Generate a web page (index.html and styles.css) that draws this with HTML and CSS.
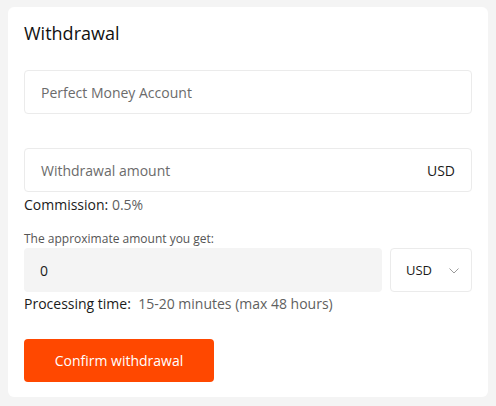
FILE: index.html
```html
<!DOCTYPE html>
<html lang="en">
<head>
<meta charset="utf-8">
<title>Withdrawal</title>
<link rel="stylesheet" href="styles.css">
</head>
<body>
<div class="card">
  <h2 class="title">Withdrawal</h2>
  <div class="field field-account">
    <span class="placeholder">Perfect Money Account</span>
  </div>
  <div class="field field-amount">
    <span class="placeholder">Withdrawal amount</span>
    <span class="unit">USD</span>
  </div>
  <div class="info commission"><span class="key">Commission:</span> <span class="val">0.5%</span></div>
  <div class="small-label">The approximate amount you get:</div>
  <div class="get-row">
    <div class="get-value">0</div>
    <div class="select">
      <span class="unit">USD</span>
      <svg class="chev" width="10" height="6" viewBox="0 0 10 6"><path d="M0.5 0.5 L5 5 L9.5 0.5" fill="none" stroke="#9a9a9a" stroke-width="1"/></svg>
    </div>
  </div>
  <div class="info processing"><span class="key">Processing time:</span>&nbsp; <span class="val">15-20 minutes (max 48 hours)</span></div>
  <button class="confirm">Confirm withdrawal</button>
</div>
</body>
</html>
```
FILE: styles.css
```css
html, body {
  margin: 0;
  padding: 0;
}
body {
  background: #f4f4f4;
  font-family: "Open Sans", "Liberation Sans", sans-serif;
  color: #1b1b1b;
  padding: 7px 8px 0 8px;
}
.card {
  background: #ffffff;
  border-radius: 6px;
  padding: 12px 16px 15px 16px;
  display: flex;
  flex-direction: column;
  width: 448px;
}
.title {
  margin: 0;
  font-size: 18px;
  font-weight: 400;
  line-height: 28px;
  color: #111;
}
.field {
  height: 44px;
  box-sizing: border-box;
  border: 1px solid #ebebeb;
  border-radius: 4px;
  display: flex;
  align-items: center;
  justify-content: space-between;
  padding: 0 16px;
  font-size: 14px;
}
.field-account {
  margin-top: 23px;
}
.field-amount {
  margin-top: 34px;
}
.placeholder {
  color: #6b6b6b;
}
.unit {
  color: #1b1b1b;
  font-size: 14px;
}
.info {
  font-size: 14px;
  line-height: 20px;
}
.info .key {
  color: #1b1b1b;
}
.info .val {
  color: #5f5f5f;
}
.commission {
  margin-top: 3px;
}
.small-label {
  margin-top: 16px;
  font-size: 12px;
  line-height: 16px;
  color: #555;
}
.get-row {
  margin-top: 1px;
  display: flex;
  gap: 8px;
}
.get-value {
  flex: 1;
  height: 44px;
  box-sizing: border-box;
  background: #f4f4f4;
  border-radius: 4px;
  display: flex;
  align-items: center;
  padding: 0 16px;
  font-size: 14px;
  color: #1b1b1b;
}
.select {
  width: 82px;
  height: 44px;
  box-sizing: border-box;
  border: 1px solid #ebebeb;
  border-radius: 4px;
  display: flex;
  align-items: center;
  justify-content: space-between;
  padding: 0 12px 0 15px;
}
.select .unit {
  font-size: 13px;
}
.chev {
  display: block;
  margin-top: 2px;
}
.processing {
  margin-top: 2px;
}
.confirm {
  margin-top: 25px;
  align-self: flex-start;
  width: 190px;
  height: 43px;
  background: #ff4800;
  color: #ffffff;
  border: none;
  border-radius: 4px;
  font-family: "Open Sans", "Liberation Sans", sans-serif;
  font-size: 14px;
  font-weight: 500;
  padding: 0;
}
```
